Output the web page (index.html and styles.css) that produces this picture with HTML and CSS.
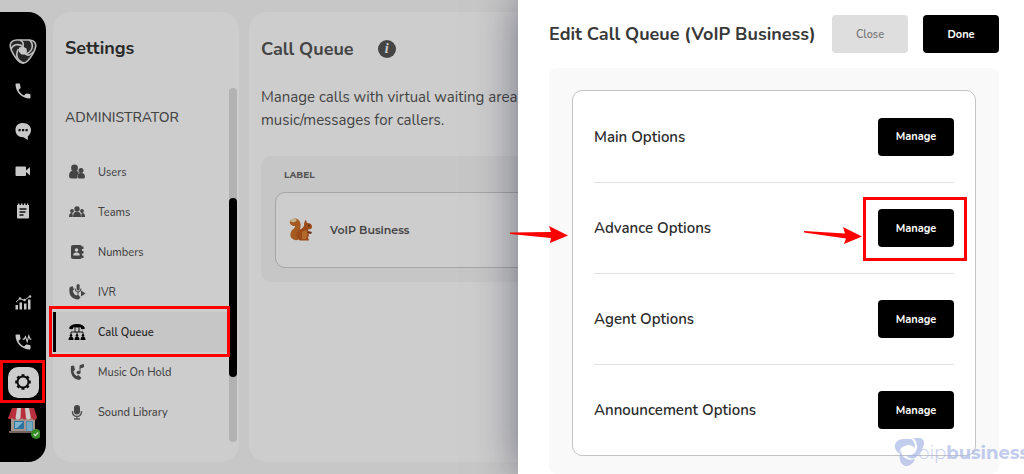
FILE: index.html
```html
<!DOCTYPE html>
<html lang="en">
<head>
<meta charset="utf-8">
<meta name="viewport" content="width=device-width, initial-scale=1">
<title>Call Queue</title>
<link rel="stylesheet" href="styles.css">
</head>
<body>
<svg class="defs" aria-hidden="true">
  <symbol id="phone" viewBox="0 0 24 24"><path d="M6.6 10.8c1.4 2.8 3.800 5.100 6.600 6.600l2.200-2.200c.3-.3.7-.4 1-.2 1.100.4 2.300.6 3.600.6.600 0 1 .4 1 1V20c0 .6-.4 1-1 1C10.600 21 3 13.400 3 4c0-.6.4-1 1-1h3.500c.6 0 1 .4 1 1 0 1.200.2 2.400.6 3.600.1.300 0 .7-.2 1z"/></symbol>
</svg>
<div class="app">
  <nav class="rail" aria-label="Main">
    <a class="rail-link logo" href="#" aria-label="Home">
      <svg width="28" height="27" viewBox="0 0 28 27">
        <path d="M7.500 2h13c5 0 7 3.500 6 7.500-1.200 4.500-4 9-7.500 13-3 3.500-7 3.500-10 0-3.500-4-6.300-8.500-7.500-13C.5 5.500 2.500 2 7.500 2z" fill="#262626" stroke="#b9b9b9" stroke-width="1.600"/>
        <path d="M2 11c2-5 8-5.500 12-2.500 1-3 0-5-3-6.500M20.500 2c5 5 3 12-4 14 2 2 5 1 8-2M15 25C8 23 6 17 9.500 11" fill="none" stroke="#c0c0c0" stroke-width="1.600"/>
        <path d="M10 9.500l4-1 3.500 2 .5 3-1.500 3h-4L10 14z" fill="#c6c6c6"/>
      </svg>
    </a>
    <a class="rail-link" href="#" aria-label="Calls"><svg width="20" height="20"><use href="#phone"/></svg></a>
    <a class="rail-link" href="#" aria-label="Chat"><svg width="18" height="18" viewBox="0 0 18 18"><path d="M9 1c4.600 0 8 3 8 7 0 2.500-1 4.700-3.200 6.500V18l-4.300-2.800C4.800 15.500 1.500 12.400 1.500 8S4.400 1 9 1z"/><path d="M4.500 7h2.200v2.200H4.500zM8 7h2.200v2.200H8zM11.500 7h2.200v2.200h-2.200z" fill="#111"/></svg></a>
    <a class="rail-link" href="#" aria-label="Video"><svg width="18" height="18" viewBox="0 0 18 18"><path d="M2.500 4.500h8.500q1 0 1 1v3l4-3.500v8.500L12 10v3q0 1-1 1H2.500q-1 0-1-1V5.500q0-1 1-1z"/></svg></a>
    <a class="rail-link" href="#" aria-label="Notes"><svg width="18" height="18" viewBox="0 0 18 18"><path d="M3 3h12v12.500q0 1-1 1H4q-1 0-1-1zM4 1.500h1.500V3H4zM7 1.500h1.500V3H7zM10 1.500h1.500V3H10zM13 1.500h1V3h-1z"/><path d="M5.500 7h7M5.500 10h6M5.500 13h4" stroke="#111" stroke-width="1.300"/></svg></a>
    <span class="rail-space"></span>
    <a class="rail-link" href="#" aria-label="Reports"><svg width="18" height="18" viewBox="0 0 18 18"><path d="M1.500 12H4v4.500H1.500zM5.500 9.500H8v7H5.500zM10 10.500h2.500v6H10zM14 6.500h2.500v10H14z"/><path d="M2 9l4-3.500 4.500 2L16 3" fill="none" stroke="#c8c8c8"/><circle cx="6" cy="5.500" r="1.200"/><circle cx="10.500" cy="7" r="1.200"/><circle cx="16" cy="3.500" r="1.200"/></svg></a>
    <a class="rail-link" href="#" aria-label="Call activity"><svg width="20" height="20" viewBox="0 0 24 24"><use href="#phone" width="24" height="24"/><path d="M11.500 8.500h2l1.500-3 2 6 2-7 1.500 4h1.500" fill="none" stroke="#c8c8c8" stroke-width="1.300"/></svg></a>
    <a class="rail-link" href="#" aria-label="Settings"><span class="gear"><svg width="18" height="18" viewBox="0 0 18 18"><circle cx="9" cy="9" r="5.500" fill="none" stroke="#0c0c0c" stroke-width="2"/><path d="M9 1.200v2.500M9 14.300v2.500M1.200 9h2.500M14.300 9h2.500M3.500 3.500l1.700 1.700M12.800 12.800l1.700 1.700M3.500 14.500l1.700-1.700M12.800 5.200l1.700-1.700" stroke="#0c0c0c" stroke-width="3"/></svg></span><span class="mark mark-gear"></span></a>
    <a class="rail-link" href="#" aria-label="Shop">
      <svg width="34" height="34" viewBox="0 0 34 34">
        <path d="M5 12h24v15H5z" fill="#a6958f"/><path d="M8 16h10v8H8z" fill="#2873a0"/><path d="M9 17h8l-6 6H9z" fill="#83b5cd"/><path d="M20 16h7v11h-7z" fill="#568cac"/><path d="M21 17h5v10h-5z" fill="#74a7c0"/><path d="M3 26h27v2H3z" fill="#75645d"/>
        <path d="M6 3h22l3 9q0 3-2.500 3T26 13q-2 3-5 0-2.500 3-5 0-2.500 3-5 0-2 3-5 0-1 2-3 1t0-3z" fill="#b8303c"/><path d="M11 3h4l-.5 10q-2.500 3-5 0zM19 3h4l2 10q-2.500 3-5 0z" fill="#cec9c9"/>
        <circle cx="30" cy="29" r="5" fill="#368d25"/><path d="M27.800 29l1.600 1.500 2.900-3" fill="none" stroke="#d1dacf" stroke-width="1.300"/>
      </svg>
    </a>
  </nav>

  <aside class="settings">
    <h1 class="title title-dark">Settings</h1>
    <div class="settings-body">
      <div class="menu">
        <h2 class="group">ADMINISTRATOR</h2>
        <a class="item" href="#"><svg width="18" height="18" viewBox="0 0 18 18"><circle cx="6.500" cy="5" r="3.400"/><path d="M1 13q0-5 4-5.500h3q2 .5 3 2.500-2 1.500-2 5.500H4q-3 0-3-2.500z"/><circle cx="13" cy="7.500" r="2.500"/><path d="M9.500 14q0-3.500 2.500-4h2q3 .5 3 4 0 1.500-2 1.500h-3.500q-2 0-2-1.500z"/></svg>Users</a>
        <a class="item" href="#"><svg width="18" height="18" viewBox="0 0 18 18"><circle cx="9" cy="6" r="2.700"/><circle cx="4" cy="8" r="1.900"/><circle cx="14" cy="8" r="1.900"/><path d="M5 14q0-5 3-5h2q3 0 3 5zM1 14q0-4 2.500-4 1.500 0 1.200 4zM17 14q0-4-2.500-4-1.500 0-1.200 4z"/></svg>Teams</a>
        <a class="item" href="#"><svg width="18" height="18" viewBox="0 0 18 18"><rect x="3" y="2" width="11" height="14" rx="2"/><path d="M14 3.500h1.500V6H14zM14 8h1.500v2.500H14zM14 12.500h1.500V15H14z"/><circle cx="8.500" cy="7" r="1.800" fill="#cdcdcd"/><path d="M5.200 12.500q0-3 3.300-3t3.300 3z" fill="#cdcdcd"/></svg>Numbers</a>
        <a class="item" href="#"><svg width="18" height="18" viewBox="0 0 18 18"><path d="M1.500 4.500l3-1.500 1.500 3.500-1.300 1.500q.8 3 3.500 4.500l1.800-1 2.500 3-2 2Q0 16 1.500 4.500z"/><rect x="8.600" y="1" width="3" height="6.500" rx="1.500"/><path d="M7 5.500q0 3.500 3 3.500t3-3.500M10 9v2.500" fill="none" stroke="#444"/><path d="M13 7.500l4.500 3-4.500 3z"/></svg>IVR</a>
        <a class="item item-on" href="#" aria-current="page"><svg width="18" height="18" viewBox="0 0 18 18"><path d="M1 5.500Q2 1 9 1t8 4.500q-2 1.500-4 .3V4.500H5v1.300Q3 7 1 5.500z"/><path d="M3 13V9h12v4M7 4.500V9M11 4.500V9M9 9v4" fill="none" stroke="#111"/><circle cx="3" cy="12.500" r="1.300"/><circle cx="9" cy="12.500" r="1.300"/><circle cx="15" cy="12.500" r="1.300"/><path d="M.5 17q0-3.500 2.500-3.500T5.500 17zM6.500 17q0-3.500 2.500-3.500t2.500 3.500zM12.500 17q0-3.500 2.500-3.500t2.500 3.500z"/></svg>Call Queue<span class="mark mark-item"></span></a>
        <a class="item" href="#"><svg width="18" height="18" viewBox="0 0 18 18"><path d="M3 3l3-.5L7 7 5.300 8.300Q6 11.500 8.500 13l2-1 3 3-2 2Q1.500 16 3 3z"/><path d="M12 9.500V2.500l3.500-1V4L12 5" stroke="#444"/><ellipse cx="10.500" cy="9.500" rx="2" ry="1.700"/></svg>Music On Hold</a>
        <a class="item" href="#"><svg width="18" height="18" viewBox="0 0 18 18"><rect x="6" y="2" width="6" height="9.500" rx="3"/><path d="M4.500 8q0 5.500 4.500 5.500T13.500 8M9 13v3M6 16h6" fill="none" stroke="#555" stroke-width="1.400"/></svg>Sound Library</a>
      </div>
      <div class="track"><div class="thumb"></div></div>
    </div>
  </aside>

  <main class="main">
    <header class="main-head">
      <h1 class="title">Call Queue</h1>
      <button class="info" type="button" aria-label="About call queues">i</button>
    </header>
    <p class="about">Manage calls with virtual waiting area<br>music/messages for callers.</p>
    <table class="queues">
      <thead><tr><th scope="col">LABEL</th></tr></thead>
      <tbody><tr><td><div class="queue">
        <svg width="26" height="26" viewBox="0 0 26 26">
          <path d="M10 23C4 24 1 19 3 15c1-3 4-3 4-6-3 0-6-2-5-5C4 1 10 0 12 5c2 5-1 7 0 9z" fill="#a45a20"/><path d="M2 4q3-4 7-1-3 4-7 1z" fill="#c5b28d"/>
          <path d="M16 9q0-5 2-6l1 3q5 0 5 4 0 2-4 2.500c0 3 2 5 0 8l1 3h-9c-6-3-4-11 2-12z" fill="#9b4a19"/><path d="M14 15q4-3 6 0l-2 7h-4z" fill="#b46a2b"/><path d="M20 14l4 1-1 2-4-1z" fill="#6f3018"/><circle cx="21" cy="8.500" r=".8" fill="#321"/>
        </svg>VoIP Business</div></td></tr></tbody>
    </table>
  </main>
</div>

<section class="drawer" aria-label="Edit call queue">
  <header class="drawer-head">
    <h2 class="drawer-title">Edit Call Queue (VoIP Business)</h2>
    <button class="btn btn-quiet" type="button">Close</button>
    <button class="btn" type="button">Done</button>
  </header>
  <div class="drawer-body">
    <div class="options">
      <div class="option"><span>Main Options</span><button class="btn" type="button">Manage</button></div>
      <div class="option"><span>Advance Options</span><div class="target"><button class="btn" type="button">Manage</button><span class="mark mark-btn"></span>
        <svg class="arrow arrow-btn" width="60" height="20" viewBox="0 0 60 20"><path d="M1 5l41 2.500-2-6.500 19 9.500L41 18l2-5.500L1 6.500z"/></svg></div>
        <svg class="arrow arrow-row" width="60" height="20" viewBox="0 0 60 20"><path d="M1 7.500L42 7l-2-6 19 9.500L41 18l1-5L1 9z"/></svg>
      </div>
      <div class="option"><span>Agent Options</span><button class="btn" type="button">Manage</button></div>
      <div class="option"><span>Announcement Options</span><button class="btn" type="button">Manage</button></div>
    </div>
  </div>
</section>
<div class="brand">
  <svg width="32" height="31" viewBox="0 0 32 31"><path d="M1 11C0 5 5 2 10 2h7c3 2 4 4 4 9-3-3-7-4-10-2-4 1-6 4-5 8-2-1-4-3-5-6z"/><path d="M19 1h6c5 0 6 5 4 9-1 4-4 8-8 11-4 1-7 0-9-3 6 1 11-2 11-8 0-4-1-7-4-9z"/><path d="M7 13c0 6 4 9 9 10l5-1c-1 3-3 5-5 6-3 2-6 1-8-1-3-4-3-9-1-14z"/></svg>
  <span class="brand-name">oip<b>business</b></span>
</div>
</body>
</html>
```
FILE: styles.css
```css
* { box-sizing: border-box; }
body {
  margin: 0;
  height: 100vh;
  overflow: hidden;
  position: relative;
  background: #c7c7c7;
  color: #444;
  font-family: Nunito, Lato, sans-serif;
}
h1, h2, p { margin: 0; }
a { color: inherit; text-decoration: none; }
button { font-family: inherit; border: 0; padding: 0; cursor: pointer; }
svg { flex: none; display: block; }
.defs { position: absolute; width: 0; height: 0; }

.app { display: flex; height: 100%; padding: 12px 0; }

.rail {
  width: 46px;
  flex: none;
  display: flex;
  flex-direction: column;
  padding: 19px 0 20px;
  background: #000;
  border-radius: 0 18px 18px 0;
  fill: #c8c8c8;
}
.rail-link {
  position: relative;
  height: 40px;
  display: flex;
  align-items: center;
  justify-content: center;
}
.rail-space { flex: 1; }
.gear {
  width: 31px;
  height: 31px;
  display: flex;
  align-items: center;
  justify-content: center;
  background: #cdcdcd;
  border-radius: 10px;
}

.settings {
  width: 186px;
  flex: none;
  display: flex;
  flex-direction: column;
  margin-left: 7px;
  padding: 24px 2px 20px 0;
  background: #cdcdcd;
  border-radius: 18px;
}
.title { font-size: 18px; line-height: 24px; font-weight: 700; }
.title-dark { padding-left: 12px; color: #292929; }
.settings-body { flex: 1; min-height: 0; display: flex; padding-top: 28px; }
.menu { flex: 1; }
.group { padding: 20px 12px 24px; font-size: 14px; line-height: 20px; font-weight: 500; }
.item {
  position: relative;
  height: 40px;
  display: flex;
  align-items: center;
  gap: 12px;
  padding-left: 15px;
  font-size: 11px;
  font-weight: 500;
  fill: #444;
}
.item-on { background: #c6c6c6; color: #292929; fill: #000; font-weight: 600; border-left: 3px solid #000; padding-left: 12px; }
.track { width: 8px; border-radius: 4px; background: #b2b2b2; padding-top: 110px; }
.thumb { height: 179px; border-radius: 4px; background: #000; }

.main {
  flex: 1;
  min-width: 0;
  margin: 0 10px;
  padding: 25px 12px;
  background: #cdcdcd;
  border-radius: 18px;
}
.main-head { display: flex; align-items: center; gap: 24px; }
.info {
  width: 18px;
  height: 18px;
  border-radius: 50%;
  background: #444;
  color: #cdcdcd;
  font: italic bold 14px/18px "Liberation Serif", serif;
}
.about { padding: 25px 0 24px; font-size: 15px; line-height: 23px; }
.queues { width: 100%; border-spacing: 14px 0; padding-bottom: 14px; background: #c6c6c6; border-radius: 10px; }
.queues th { height: 36px; padding: 0 9px; text-align: left; font: 700 9px Montserrat, "Open Sans", sans-serif; color: #555; }
.queues td { padding: 0; }
.queue {
  height: 76px;
  display: flex;
  align-items: center;
  gap: 16px;
  padding-left: 12px;
  background: #cdcdcd;
  border: 1px solid #a5a5a5;
  border-radius: 10px;
  font: 600 11px Montserrat, "Open Sans", sans-serif;
}

.drawer {
  position: absolute;
  top: 0;
  right: 0;
  bottom: 0;
  width: calc(50% - 6px);
  padding: 15px 25px 0 31px;
  background: #fff;
  box-shadow: 0 0 40px rgba(20, 22, 50, .5);
}
.drawer-head { display: flex; align-items: center; gap: 15px; padding-bottom: 15px; }
.drawer-title { flex: 1; min-width: 0; font-size: 18px; line-height: 24px; font-weight: 700; color: #383838; white-space: nowrap; }
.btn {
  width: 76px;
  height: 38px;
  flex: none;
  border-radius: 4px;
  background: #000;
  color: #fff;
  font-size: 11px;
  font-weight: 700;
}
.btn-quiet { background: #dedede; color: #777; font-weight: 600; }
.drawer-body { padding: 22px 23px 18px; background: #f9f9f9; border-radius: 8px; }
.options { padding: 0 21px; background: #fff; border: 1px solid #c4c4c4; border-radius: 10px; }
.option {
  position: relative;
  height: 91px;
  display: flex;
  align-items: center;
  justify-content: space-between;
  font-size: 15px;
  font-weight: 600;
  color: #2b2b2b;
}
.option + .option { border-top: 1px solid #e2e2e2; }
.target { position: relative; }

/* highlight frames and arrows laid over the controls */
.mark { position: absolute; border: 3px solid #f00; pointer-events: none; }
.mark-gear { inset: -2px 1px -1px 0; }
.mark-item { inset: -6px -1px -5px -7px; }
.mark-btn { inset: -12px -13px -14px -15px; }
.arrow { position: absolute; fill: #f00; }
.arrow-btn { right: 91px; top: 17px; }
.arrow-row { left: -85px; top: 42px; }

.brand {
  position: absolute;
  right: -5px;
  bottom: 6px;
  display: flex;
  align-items: center;
  color: #a9b7e6;
  fill: #a9b7e6;
  opacity: .7;
  font: 300 18px Montserrat, "Open Sans", sans-serif;
}
.brand-name { margin-left: -8px; }
.brand-name b { font-weight: 700; }
```
